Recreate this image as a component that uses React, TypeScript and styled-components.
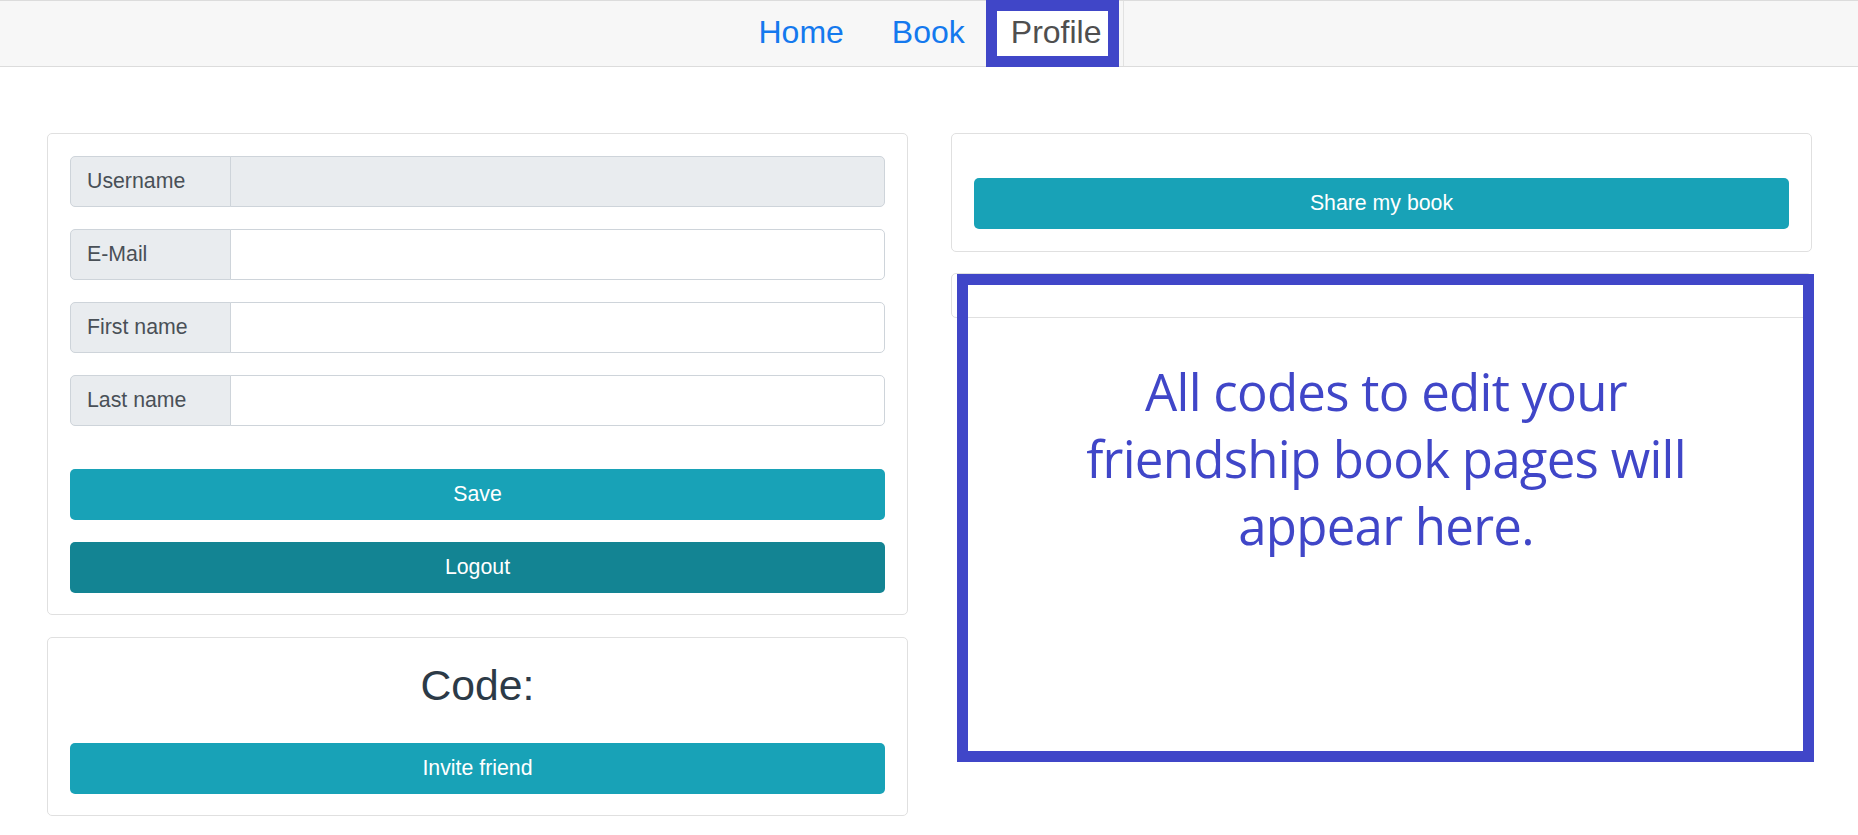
import React from "react";
import styled, { createGlobalStyle } from "styled-components";

const GlobalStyle = createGlobalStyle`
  * { box-sizing: border-box; }
  html, body { margin: 0; padding: 0; background: #ffffff; }
  body {
    font-family: "Liberation Sans", Arial, Helvetica, sans-serif;
    color: #212529;
  }
`;

const Navbar = styled.nav`
  display: flex;
  justify-content: center;
  align-items: stretch;
  height: 67px;
  background: #f7f7f7;
  border-top: 1px solid #dcdcdc;
  border-bottom: 1px solid #dcdcdc;
`;

const NavLink = styled.a`
  display: flex;
  align-items: center;
  padding: 0 24px 2px;
  font-size: 32px;
  color: #1479ee;
  text-decoration: none;
  cursor: pointer;
`;

const ActiveNavItem = styled.a`
  display: flex;
  align-items: center;
  margin: -1px 0 -1px -3px;
  padding: 0 6px 2px 14px;
  border: 11px solid #4046c8;
  background: #ffffff;
  font-size: 32px;
  color: #4f4f4f;
  text-decoration: none;
`;

const NavDivider = styled.span`
  width: 5px;
  border-right: 1px solid #e2e2e2;
`;

const Main = styled.main`
  display: grid;
  grid-template-columns: 1fr 1fr;
  column-gap: 43px;
  align-items: start;
  padding: 66px 46px 0 47px;
`;

const Column = styled.div<{ $gap: number }>`
  display: flex;
  flex-direction: column;
  gap: ${(p) => p.$gap}px;
`;

const Card = styled.section<{ $pad: string }>`
  border: 1px solid #e0e0e0;
  border-radius: 5px;
  background: #ffffff;
  padding: ${(p) => p.$pad};
`;

const FieldList = styled.div`
  display: flex;
  flex-direction: column;
  gap: 22px;
`;

const InputGroup = styled.div`
  display: flex;
  height: 51px;
`;

const Addon = styled.span`
  display: flex;
  align-items: center;
  width: 161px;
  flex: none;
  padding: 0 16px;
  background: #e9ecef;
  border: 1px solid #ced4da;
  border-radius: 5px 0 0 5px;
  font-size: 21.3px;
  color: #495057;
`;

const TextInput = styled.input`
  flex: 1;
  min-width: 0;
  margin-left: -1px;
  border: 1px solid #ced4da;
  border-radius: 0 5px 5px 0;
  background: ${(p) => (p.disabled ? "#e9ecef" : "#ffffff")};
  font-family: inherit;
  font-size: 21.3px;
  color: #495057;
  padding: 0 16px;
  outline: none;
`;

const ButtonStack = styled.div`
  display: flex;
  flex-direction: column;
  gap: 22px;
  margin-top: 43px;
`;

const Button = styled.button<{ $dark?: boolean }>`
  display: block;
  width: 100%;
  height: 51px;
  border: none;
  border-radius: 5px;
  background: ${(p) => (p.$dark ? "#138493" : "#18a2b7")};
  color: #ffffff;
  font-family: inherit;
  font-size: 21.3px;
  cursor: pointer;
`;

const CodeHeading = styled.h2`
  margin: 0 0 32px;
  text-align: center;
  font-size: 42.7px;
  font-weight: 400;
  line-height: 51px;
  color: #2c3a47;
`;

const CodesSection = styled.div`
  position: relative;
`;

const EmptyCard = styled.div`
  height: 45px;
  border: 1px solid #e0e0e0;
  border-radius: 5px;
`;

const Message = styled.h1`
  margin: 40px 0 0;
  padding: 0 0 0 9px;
  text-align: center;
  font-family: "Open Sans", "Noto Sans", sans-serif;
  font-weight: 400;
  font-size: 51px;
  line-height: 67px;
  letter-spacing: -0.75px;
  color: #4046c8;
`;

const MessageText = styled.span`
  display: inline-block;
  max-width: 640px;
`;

const Highlight = styled.div`
  position: absolute;
  top: 1px;
  left: 6px;
  width: 857px;
  height: 488px;
  border: 11px solid #4046c8;
  pointer-events: none;
`;

export default function App() {
  return (
    <>
      <GlobalStyle />
      <Navbar>
        <NavLink>Home</NavLink>
        <NavLink>Book</NavLink>
        <ActiveNavItem>Profile</ActiveNavItem>
        <NavDivider />
      </Navbar>
      <Main>
        <Column $gap={22}>
          <Card $pad="22px 22px 21px">
            <FieldList>
              <InputGroup>
                <Addon>Username</Addon>
                <TextInput disabled />
              </InputGroup>
              <InputGroup>
                <Addon>E-Mail</Addon>
                <TextInput />
              </InputGroup>
              <InputGroup>
                <Addon>First name</Addon>
                <TextInput />
              </InputGroup>
              <InputGroup>
                <Addon>Last name</Addon>
                <TextInput />
              </InputGroup>
            </FieldList>
            <ButtonStack>
              <Button>Save</Button>
              <Button $dark>Logout</Button>
            </ButtonStack>
          </Card>
          <Card $pad="22px 22px 21px">
            <CodeHeading>Code:</CodeHeading>
            <Button>Invite friend</Button>
          </Card>
        </Column>
        <Column $gap={21}>
          <Card $pad="44px 22px 22px">
            <Button>Share my book</Button>
          </Card>
          <CodesSection>
            <EmptyCard />
            <Message>
              <MessageText>
                All codes to edit your friendship book pages will appear here.
              </MessageText>
            </Message>
            <Highlight />
          </CodesSection>
        </Column>
      </Main>
    </>
  );
}
